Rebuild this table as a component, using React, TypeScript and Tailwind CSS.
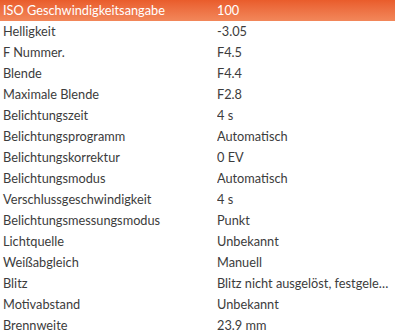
const rows: [string, string][] = [
  ["ISO Geschwindigkeitsangabe", "100"],
  ["Helligkeit", "-3.05"],
  ["F Nummer.", "F4.5"],
  ["Blende", "F4.4"],
  ["Maximale Blende", "F2.8"],
  ["Belichtungszeit", "4 s"],
  ["Belichtungsprogramm", "Automatisch"],
  ["Belichtungskorrektur", "0 EV"],
  ["Belichtungsmodus", "Automatisch"],
  ["Verschlussgeschwindigkeit", "4 s"],
  ["Belichtungsmessungsmodus", "Punkt"],
  ["Lichtquelle", "Unbekannt"],
  ["Weißabgleich", "Manuell"],
  ["Blitz", "Blitz nicht ausgelöst, festgelegter Modus"],
  ["Motivabstand", "Unbekannt"],
  ["Brennweite", "23.9 mm"],
];

export default function App() {
  return (
    <div className="w-[395px] h-[336px] bg-white overflow-hidden font-['Lato',sans-serif] text-[12.75px] text-[#3c3c3c]">
      {rows.map(([k, v], i) => (
        <div
          key={k}
          className={`flex h-[21px] items-center ${
            i === 0 ? "bg-gradient-to-b from-[#e95c2b] to-[#f2875a] text-white" : ""
          }`}
        >
          <div className="w-[217px] pl-[3px] truncate">{k}</div>
          <div className="flex-1 min-w-0 truncate pr-[2px]">{v}</div>
        </div>
      ))}
    </div>
  );
}
